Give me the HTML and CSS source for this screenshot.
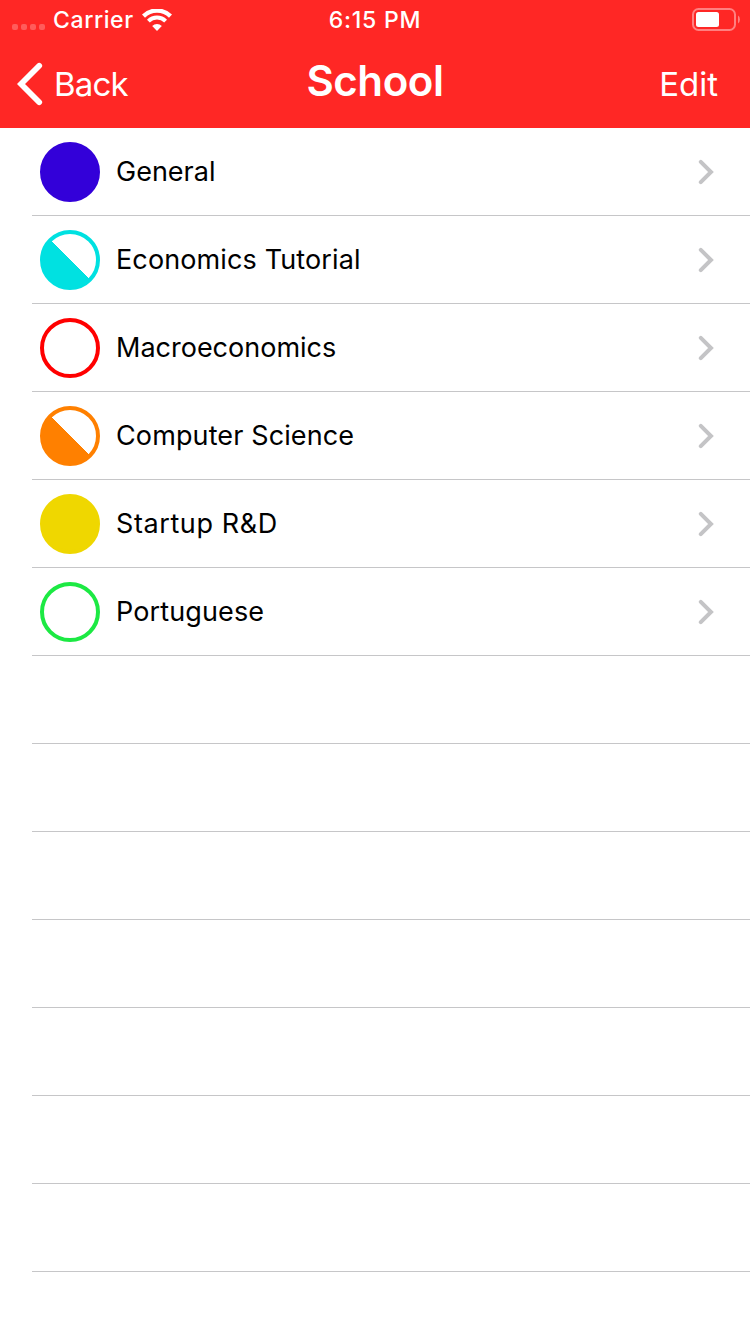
FILE: index.html
```html
<!DOCTYPE html>
<html lang="en">
<head>
<meta charset="utf-8">
<title>School</title>
<link rel="stylesheet" href="styles.css">
</head>
<body>
<header class="header">
  <div class="status">
    <div class="status-left">
      <span class="dots"><i></i><i></i><i></i><i></i></span>
      <span class="carrier">Carrier</span>
      <svg class="wifi" width="30" height="22" viewBox="0 0 30 22" fill="none" stroke="#fff">
        <path d="M1.5 7.1a19.2 19.2 0 0 1 27 0" stroke-width="4.3"/>
        <path d="M6.4 12.1a12.2 12.2 0 0 1 17.2 0" stroke-width="4"/>
        <path d="M15 22l-4.8-4.9a6.8 6.8 0 0 1 9.6 0z" fill="#fff" stroke="none"/>
      </svg>
    </div>
    <span class="time">6:15 PM</span>
    <svg class="battery" width="48" height="23" viewBox="0 0 48 23">
      <rect x="1" y="1" width="42" height="21" rx="5.5" fill="none" stroke="#ff8080" stroke-width="2"/>
      <rect x="4" y="4" width="23" height="15" rx="2.5" fill="#fff"/>
      <path d="M46 7.5q1.9 1.2 1.9 4t-1.9 4z" fill="#ff8080"/>
    </svg>
  </div>
  <nav class="nav">
    <a class="back">
      <svg width="26" height="44" viewBox="0 0 26 44" fill="none" stroke="#fff" stroke-width="5.8" stroke-linecap="round"><path d="M22.2 3.8L4 22l18.2 18.2"/></svg>
      <span class="back-label">Back</span>
    </a>
    <h1 class="title">School</h1>
    <a class="edit">Edit</a>
  </nav>
</header>
<ul class="list">
  <li class="row"><span class="mark full indigo"></span><span class="name general">General</span><svg class="chevron" viewBox="0 0 16 26"><path d="M2.8 2.8L13 13 2.8 23.2"/></svg></li>
  <li class="row"><span class="mark half cyan"></span><span class="name economics">Economics Tutorial</span><svg class="chevron" viewBox="0 0 16 26"><path d="M2.8 2.8L13 13 2.8 23.2"/></svg></li>
  <li class="row"><span class="mark red"></span><span class="name macro">Macroeconomics</span><svg class="chevron" viewBox="0 0 16 26"><path d="M2.8 2.8L13 13 2.8 23.2"/></svg></li>
  <li class="row"><span class="mark half orange"></span><span class="name computer">Computer Science</span><svg class="chevron" viewBox="0 0 16 26"><path d="M2.8 2.8L13 13 2.8 23.2"/></svg></li>
  <li class="row"><span class="mark full yellow"></span><span class="name startup">Startup R&amp;D</span><svg class="chevron" viewBox="0 0 16 26"><path d="M2.8 2.8L13 13 2.8 23.2"/></svg></li>
  <li class="row"><span class="mark green"></span><span class="name portuguese">Portuguese</span><svg class="chevron" viewBox="0 0 16 26"><path d="M2.8 2.8L13 13 2.8 23.2"/></svg></li>
  <li class="row"></li>
  <li class="row"></li>
  <li class="row"></li>
  <li class="row"></li>
  <li class="row"></li>
  <li class="row"></li>
  <li class="row"></li>
</ul>
</body>
</html>
```
FILE: styles.css
```css
* { box-sizing: border-box; }
body {
  margin: 0;
  height: 1334px;
  overflow: hidden;
  background: #fff;
  color: #000;
  font-family: Inter, "Liberation Sans", sans-serif;
}
.header { height: 128px; background: #ff2725; color: #fff; }
.status {
  display: grid;
  grid-template-columns: 1fr auto 1fr;
  align-items: center;
  height: 40px;
  padding: 0 10px 0 12px;
  font-size: 23px;
  line-height: 40px;
  font-weight: 500;
}
.status-left { display: flex; align-items: center; }
.dots { display: flex; gap: 3px; margin: 14px 8px 0 0; }
.dots i { width: 6px; height: 6px; border-radius: 2px; background: #ff5c5b; }
.carrier { letter-spacing: 0.6px; width: 82px; white-space: nowrap; }
.wifi { margin-left: 7px; }
.time { letter-spacing: 0.8px; margin: 0 1px 0 -1px; }
.battery { justify-self: end; margin-top: -1px; }
.nav {
  display: grid;
  grid-template-columns: 1fr auto 1fr;
  height: 88px;
  padding: 0 32px 0 17px;
  font-size: 33px;
  line-height: 88px;
}
.back { display: flex; align-items: center; gap: 11px; }
.back-label { letter-spacing: -0.8px; }
.title {
  margin: 0;
  padding-left: 15px;
  font-size: 42px;
  font-weight: 600;
  line-height: 82px;
  letter-spacing: -0.4px;
}
.edit { justify-self: end; }
.list { margin: 0; padding: 0 0 0 32px; list-style: none; }
.row {
  display: flex;
  align-items: center;
  height: 88px;
  padding: 0 36px 0 8px;
  border-bottom: 1px solid #c6c6c8;
}
.mark {
  width: 60px;
  height: 60px;
  margin-right: 16px;
  border: 4px solid currentColor;
  border-radius: 50%;
}
.full { background: currentColor; }
.half { background: linear-gradient(45deg, currentColor 50%, #fff 50.8%) border-box; }
.indigo { color: #3300d9; }
.cyan { color: #00e1e1; }
.red { color: #ff0000; }
.orange { color: #ff8000; }
.yellow { color: #efd700; }
.green { color: #1ce943; }
.name { font-size: 27px; line-height: 40px; }
.economics, .computer, .portuguese { letter-spacing: 0.12px; }
.startup { letter-spacing: 0.6px; }
.chevron {
  width: 16px;
  height: 26px;
  margin-left: auto;
  fill: none;
  stroke: #c4c4c6;
  stroke-width: 4;
  stroke-linecap: round;
}
```
